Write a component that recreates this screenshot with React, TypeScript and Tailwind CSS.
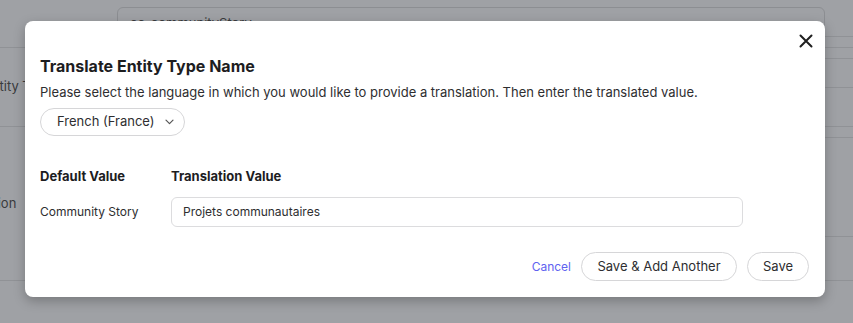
import React from "react";

export default function App() {
  return (
    <div className="relative w-[853px] h-[323px] overflow-hidden bg-[#9fa1a5]" style={{ fontFamily: "Inter, 'Noto Sans', sans-serif" }}>
      {/* background page (dimmed) */}
      <div className="flex h-full text-[13px] text-[#3a3b3d]">
        <div className="w-[117px] shrink-0 flex flex-col">
          <div className="h-[48px] border-b border-[#909296]" />
          <div className="h-[79px] border-b border-[#909296] flex items-center overflow-hidden">
            <span className="whitespace-nowrap ml-[-16px]">Entity Type</span>
          </div>
          <div className="h-[154px] border-b border-[#909296] flex items-center overflow-hidden">
            <span className="whitespace-nowrap ml-[-54px]">Description</span>
          </div>
        </div>
        <div className="flex-1 flex flex-col">
          <div className="pt-[7px]">
            <div className="h-[32px] rounded-[6px] border border-[#8c8e92] px-[12px] pt-[6px]">cc_communityStory</div>
          </div>
          <div className="mt-auto mb-[42px] border-b border-[#909296]" />
        </div>
        <div className="w-[28px] shrink-0 flex flex-col">
          <div className="h-[37px] border-b border-[#909296]" />
          <div className="h-[11px] border-b border-[#909296]" />
          <div className="h-[11px] border-b border-[#909296]" />
          <div className="h-[29px] border-b border-[#909296]" />
          <div className="h-[39px] border-b border-[#909296]" />
          <div className="h-[11px] border-b border-[#909296]" />
          <div className="h-[99px] border-b border-[#909296]" />
          <div className="h-[44px] border-b border-[#909296]" />
        </div>
      </div>

      {/* modal */}
      <div className="absolute left-[25px] top-[21px] w-[800px] h-[276px] rounded-[8px] bg-white shadow-[0_4px_12px_rgba(0,0,0,0.25)] px-[15px]">
        <button className="absolute right-[10px] top-[11px] w-[18px] h-[18px] flex items-center justify-center text-[#1f1f1f]">
          <svg width="14" height="14" viewBox="0 0 14 14" fill="none" stroke="currentColor" strokeWidth="2" strokeLinecap="round">
            <path d="M1.5 1.5L12.5 12.5M12.5 1.5L1.5 12.5" />
          </svg>
        </button>
        <h2 className="pt-[35px] text-[16px] leading-[20px] font-bold text-[#1d1d1f]">Translate Entity Type Name</h2>
        <p className="mt-[6px] text-[13px] leading-[20px] text-[#2e2e30]">Please select the language in which you would like to provide a translation. Then enter the translated value.</p>
        <button className="mt-[6px] h-[28px] w-[145px] rounded-full border border-[#d6d6d8] flex items-center pl-[16px] text-[13px] text-[#2e2e30]">
          <span>French (France)</span>
          <svg className="ml-[10px]" width="9" height="6" viewBox="0 0 9 6" fill="none" stroke="#555" strokeWidth="1.2" strokeLinecap="round" strokeLinejoin="round">
            <path d="M1 1.2L4.5 4.7L8 1.2" />
          </svg>
        </button>
        <div className="mt-[30px] flex text-[13px] leading-[20px] font-bold text-[#1d1d1f]">
          <div className="w-[131px]">Default Value</div>
          <div>Translation Value</div>
        </div>
        <div className="mt-[11px] flex items-center">
          <div className="w-[131px] text-[12px] text-[#2e2e30]">Community Story</div>
          <div className="w-[572px] h-[30px] rounded-[6px] border border-[#dcdcde] flex items-center px-[11px] text-[12px] text-[#2e2e30]">Projets communautaires</div>
        </div>
        <div className="mt-[25px] flex items-center justify-end gap-[10px] pr-[1px]">
          <button className="text-[12px] text-[#6062f0]">Cancel</button>
          <button className="h-[29px] w-[156px] rounded-full border border-[#d6d6d8] text-[13px] text-[#2e2e30]">Save &amp; Add Another</button>
          <button className="h-[29px] w-[62px] rounded-full border border-[#d6d6d8] text-[13px] text-[#2e2e30]">Save</button>
        </div>
      </div>
    </div>
  );
}
